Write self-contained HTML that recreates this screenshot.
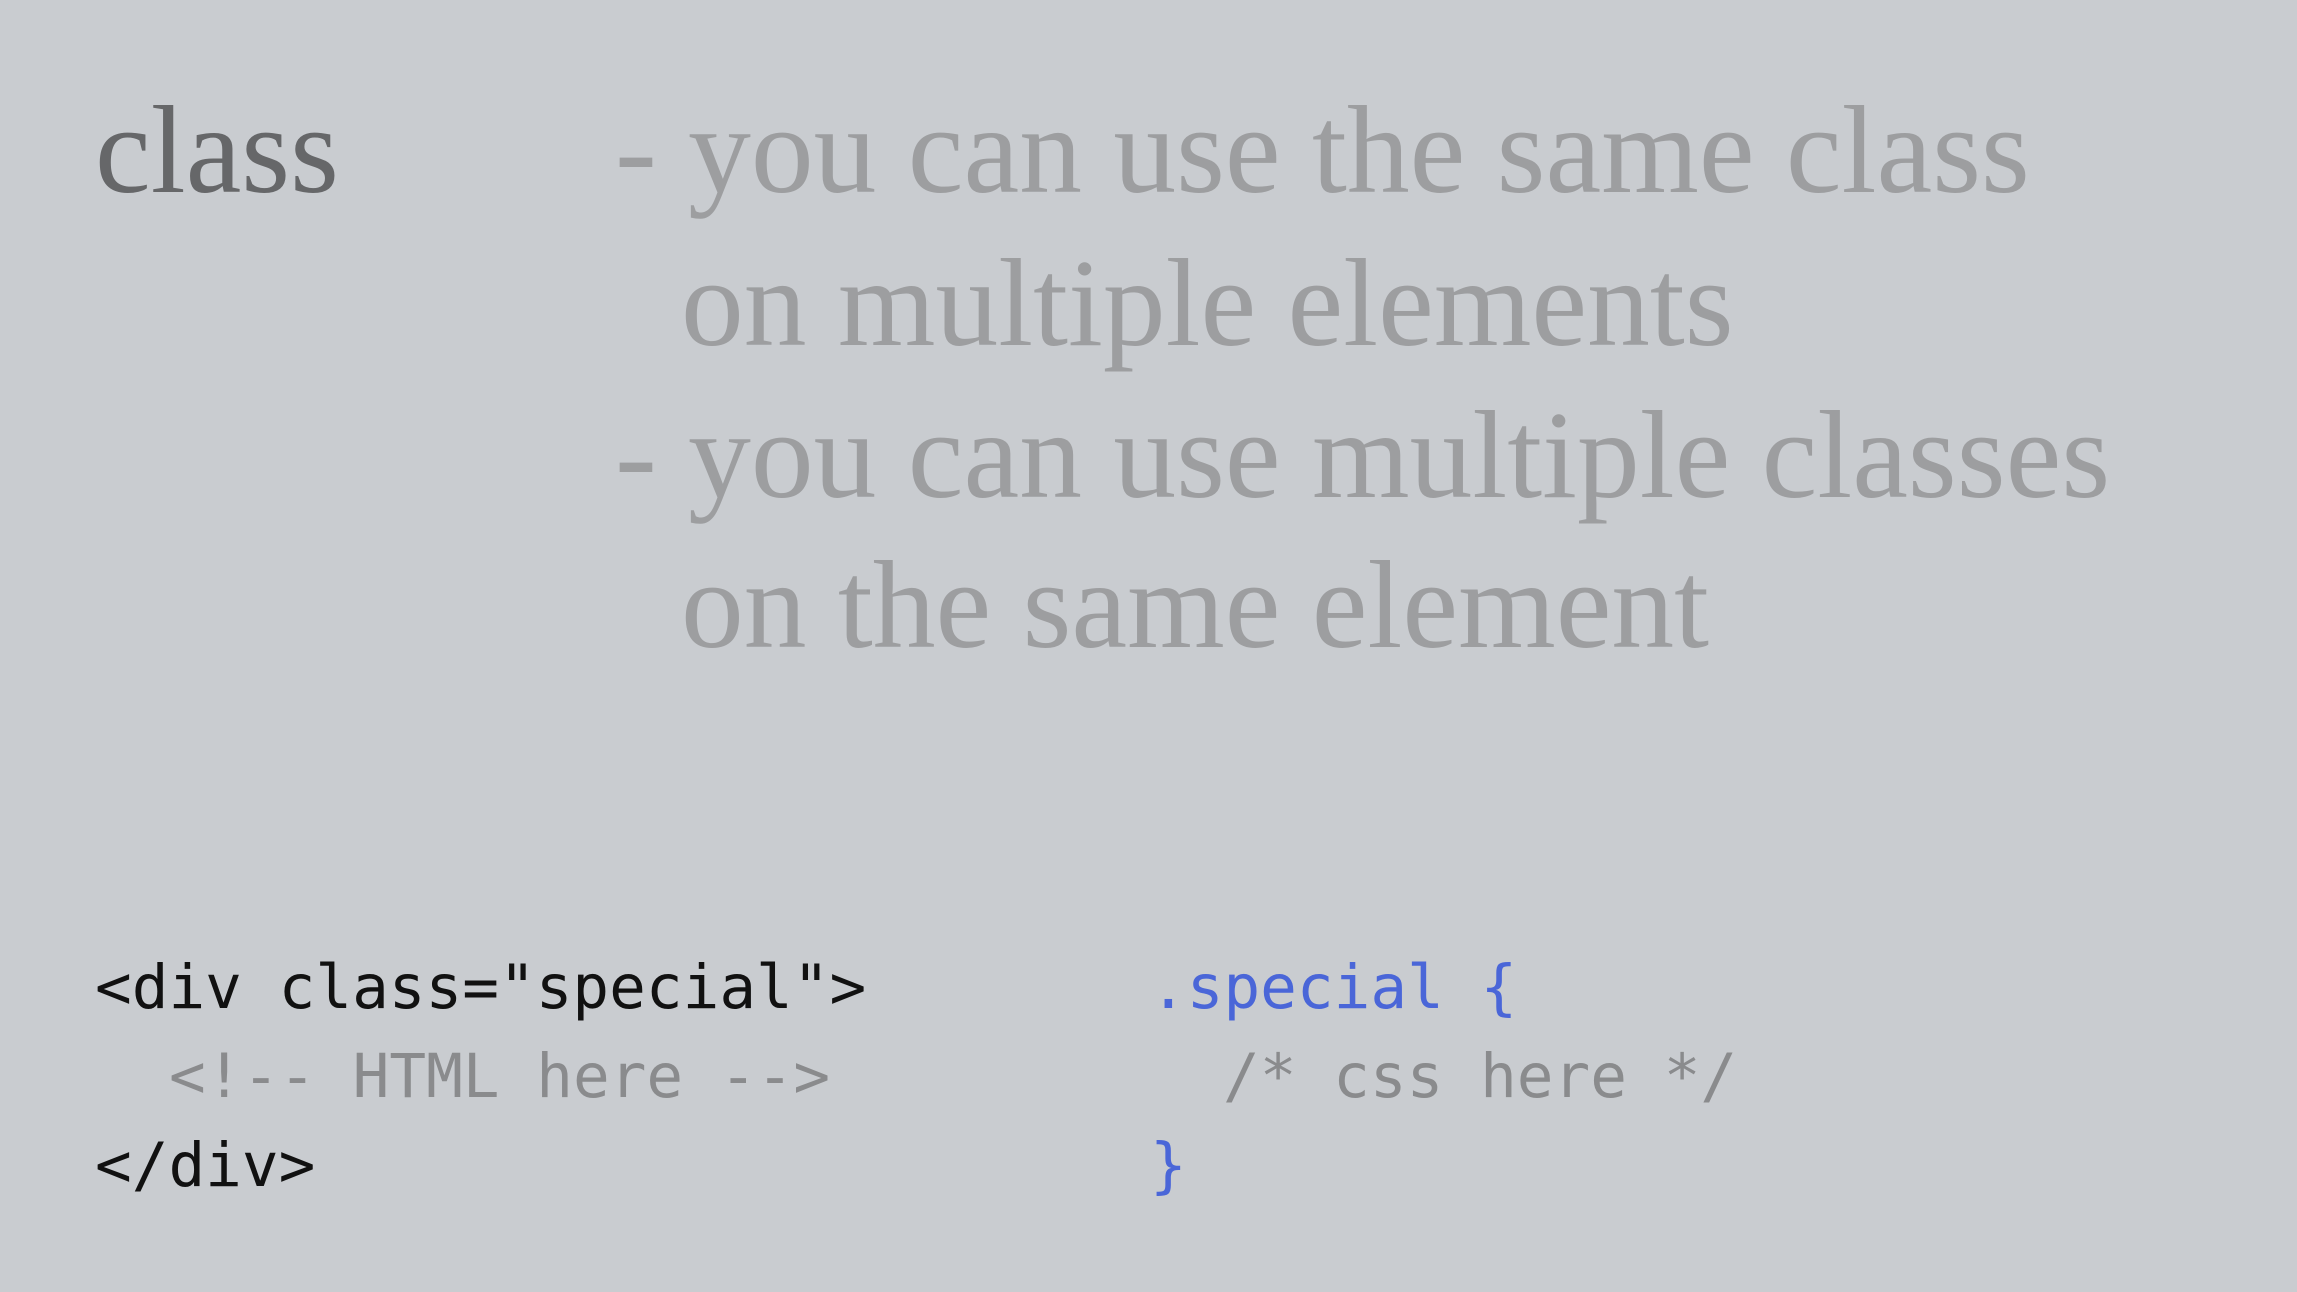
<!DOCTYPE html>
<html><head><meta charset="utf-8"><style>
html,body{margin:0;padding:0}
body{width:2297px;height:1292px;background:#c9ccd0;position:relative;overflow:hidden}
.s{position:absolute;font-family:"Liberation Serif",serif;font-size:125.5px;line-height:1;white-space:pre;color:#9d9e a0;color:#9d9ea0}
.m{position:absolute;font-family:"DejaVu Sans Mono","Liberation Mono",monospace;font-size:61px;line-height:1;white-space:pre;color:#111}
.g{color:#8a8b8d}.b{color:#4a66d8}
</style></head><body>
<div class="s" style="left:95px;top:88px;color:#666769">class</div>
<div class="s" style="left:615px;top:88px">- you can use the same class</div>
<div class="s" style="left:681px;top:241px">on multiple elements</div>
<div class="s" style="left:615px;top:393px">- you can use multiple classes</div>
<div class="s" style="left:681px;top:543px">on the same element</div>
<div class="m" style="left:95px;top:957px">&lt;div class="special"&gt;</div>
<div class="m g" style="left:169px;top:1046px">&lt;!-- HTML here --&gt;</div>
<div class="m" style="left:95px;top:1135px">&lt;/div&gt;</div>
<div class="m b" style="left:1150px;top:957px">.special {</div>
<div class="m g" style="left:1223px;top:1046px">/* css here */</div>
<div class="m b" style="left:1150px;top:1135px">}</div>
</body></html>
